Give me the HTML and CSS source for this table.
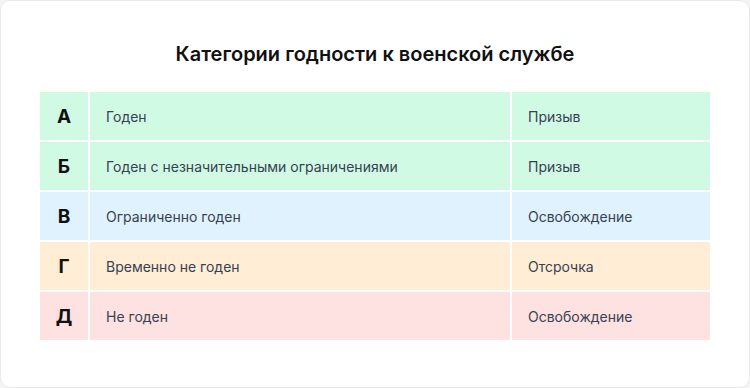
FILE: index.html
```html
<!DOCTYPE html>
<html lang="ru">
<head>
<meta charset="utf-8">
<link rel="stylesheet" href="styles.css">
</head>
<body>
<div class="card">
  <h1 class="title">Категории годности к военской службе</h1>
  <div class="table">
    <div class="row green"><div class="cell letter">А</div><div class="cell">Годен</div><div class="cell">Призыв</div></div>
    <div class="row green"><div class="cell letter">Б</div><div class="cell">Годен с незначительными ограничениями</div><div class="cell">Призыв</div></div>
    <div class="row blue"><div class="cell letter">В</div><div class="cell">Ограниченно годен</div><div class="cell">Освобождение</div></div>
    <div class="row orange"><div class="cell letter">Г</div><div class="cell">Временно не годен</div><div class="cell">Отсрочка</div></div>
    <div class="row red"><div class="cell letter">Д</div><div class="cell">Не годен</div><div class="cell">Освобождение</div></div>
  </div>
</div>
</body>
</html>
```
FILE: styles.css
```css
* { box-sizing: border-box; }
html, body { margin: 0; padding: 0; background: #f4f4f5; }
body { font-family: Inter, "Noto Sans", sans-serif; }
.card {
  width: 750px;
  height: 388px;
  background: #ffffff;
  border: 1px solid #e9e9eb;
  border-radius: 10px;
  padding: 40px 39px 0;
  display: flex;
  flex-direction: column;
  align-items: stretch;
}
.title {
  margin: 0 0 25px;
  font-size: 20px;
  line-height: 26px;
  font-weight: 600;
  color: #111111;
  text-align: center;
}
.table {
  display: flex;
  flex-direction: column;
  gap: 2px;
}
.row {
  display: grid;
  grid-template-columns: 48px 420px 198px;
  column-gap: 2px;
  height: 48px;
}
.cell {
  display: flex;
  align-items: center;
  padding: 0 16px;
  font-size: 14px;
  color: #374151;
}
.letter {
  justify-content: center;
  padding: 0;
  font-size: 19px;
  font-weight: 700;
  color: #111111;
}
.green .cell { background: #d1fae5; }
.blue .cell { background: #e0f2fe; }
.orange .cell { background: #ffedd5; }
.red .cell { background: #fee2e2; }
```
